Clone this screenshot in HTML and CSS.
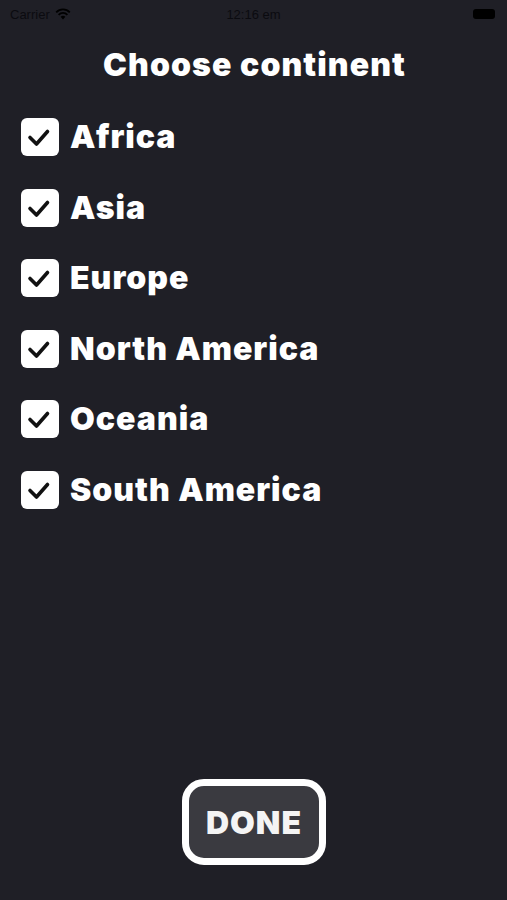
FILE: index.html
```html
<!DOCTYPE html>
<html>
<head>
<meta charset="utf-8">
<link rel="stylesheet" href="styles.css">
</head>
<body>
<div class="screen">
  <div class="status">
    <div class="status-left">
      <span>Carrier</span>
      <svg class="wifi" width="16" height="12" viewBox="0 0 16 12"><path d="M8 11.5 L5.6 8.8 A3.5 3.5 0 0 1 10.4 8.8 Z" fill="#000"/><path d="M3.6 6.8 A6.2 6.2 0 0 1 12.4 6.8" stroke="#000" stroke-width="1.8" fill="none"/><path d="M1.2 4.3 A9.5 9.5 0 0 1 14.8 4.3" stroke="#000" stroke-width="1.8" fill="none"/></svg>
    </div>
    <div class="status-time">12:16 em</div>
    <div class="status-right"><span class="battery"></span></div>
  </div>
  <h1 class="title">Choose continent</h1>
  <ul class="list">
    <li class="item"><span class="box"><svg width="38" height="38" viewBox="0 0 38 38"><path d="M9 19.5 L15.5 26 L26.5 13.5" stroke="#111" stroke-width="3.6" fill="none" stroke-linecap="round" stroke-linejoin="round"/></svg></span><span class="label">Africa</span></li>
    <li class="item"><span class="box"><svg width="38" height="38" viewBox="0 0 38 38"><path d="M9 19.5 L15.5 26 L26.5 13.5" stroke="#111" stroke-width="3.6" fill="none" stroke-linecap="round" stroke-linejoin="round"/></svg></span><span class="label">Asia</span></li>
    <li class="item"><span class="box"><svg width="38" height="38" viewBox="0 0 38 38"><path d="M9 19.5 L15.5 26 L26.5 13.5" stroke="#111" stroke-width="3.6" fill="none" stroke-linecap="round" stroke-linejoin="round"/></svg></span><span class="label">Europe</span></li>
    <li class="item"><span class="box"><svg width="38" height="38" viewBox="0 0 38 38"><path d="M9 19.5 L15.5 26 L26.5 13.5" stroke="#111" stroke-width="3.6" fill="none" stroke-linecap="round" stroke-linejoin="round"/></svg></span><span class="label">North America</span></li>
    <li class="item"><span class="box"><svg width="38" height="38" viewBox="0 0 38 38"><path d="M9 19.5 L15.5 26 L26.5 13.5" stroke="#111" stroke-width="3.6" fill="none" stroke-linecap="round" stroke-linejoin="round"/></svg></span><span class="label">Oceania</span></li>
    <li class="item"><span class="box"><svg width="38" height="38" viewBox="0 0 38 38"><path d="M9 19.5 L15.5 26 L26.5 13.5" stroke="#111" stroke-width="3.6" fill="none" stroke-linecap="round" stroke-linejoin="round"/></svg></span><span class="label">South America</span></li>
  </ul>
  <div class="footer">
    <button class="done">DONE</button>
  </div>
</div>
</body>
</html>
```

FILE: styles.css
```css
html, body {
  margin: 0;
  padding: 0;
  background: #1f1f26;
}
.screen {
  width: 507px;
  height: 900px;
  display: flex;
  flex-direction: column;
  font-family: Inter, "Noto Sans", sans-serif;
  color: #fff;
}
.status {
  height: 28px;
  display: flex;
  align-items: center;
  justify-content: space-between;
  padding: 0 10px;
  font-family: "Liberation Sans", Arial, sans-serif;
  font-size: 13px;
  color: #0b0b10;
  position: relative;
}
.status-left {
  display: flex;
  align-items: center;
  gap: 5px;
  width: 100px;
}
.status-time {
  position: absolute;
  left: 0;
  right: 0;
  text-align: center;
}
.status-right {
  width: 100px;
  display: flex;
  justify-content: flex-end;
  padding-right: 2px;
}
.battery {
  width: 22px;
  height: 10px;
  background: #000;
  border-radius: 3px;
}
.title {
  margin: 17px 0 0;
  padding-left: 2px;
  text-align: center;
  font-size: 32px;
  font-weight: 900;
  line-height: 40px;
  letter-spacing: 1.1px;
}
.list {
  list-style: none;
  margin: 33px 0 0;
  padding: 0 0 0 21px;
  display: flex;
  flex-direction: column;
  gap: 32.5px;
}
.item {
  display: flex;
  align-items: center;
  gap: 11px;
  height: 38px;
}
.box {
  width: 38px;
  height: 38px;
  background: #fff;
  border-radius: 6px;
  display: flex;
  align-items: center;
  justify-content: center;
}
.label {
  font-size: 32px;
  font-weight: 900;
  line-height: 38px;
  letter-spacing: 1px;
}
.footer {
  margin-top: auto;
  display: flex;
  justify-content: center;
  padding-bottom: 35px;
  padding-left: 1px;
}
.done {
  width: 144px;
  height: 86px;
  border: 7px solid #fff;
  border-radius: 22px;
  background: #3a3a40;
  color: #f4f4f4;
  font-family: Inter, "Noto Sans", sans-serif;
  font-size: 32px;
  font-weight: 900;
  letter-spacing: 1px;
  padding: 0;
}
```
